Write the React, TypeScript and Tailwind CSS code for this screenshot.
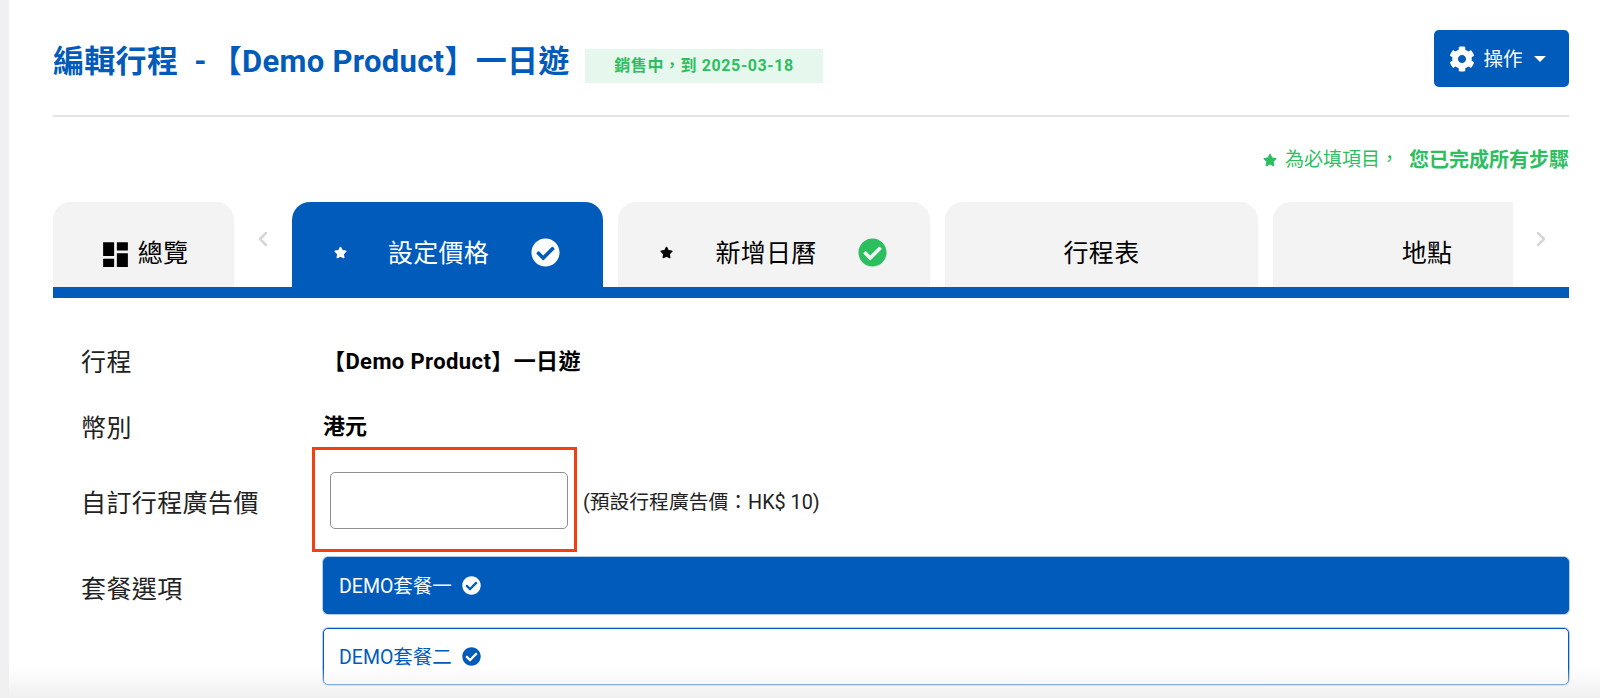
import { ChevronLeft, ChevronRight } from 'lucide-react'
import { FaCheckCircle, FaCog, FaStar } from 'react-icons/fa'
import { MdDashboard } from 'react-icons/md'

const BLUE = 'text-[#015bbb]'

function Star({ className }: { className: string }) {
  return <FaStar className={`text-[13px] ${className}`} />
}

function Tab({ label, width, textClass, mark, check, active }: { label: string; width: string; textClass?: string; mark?: boolean; check?: boolean; active?: boolean }) {
  const color = active ? 'bg-[#015bbb] text-white' : 'bg-[#f3f3f3] text-black'
  return (
    <div className={`relative flex h-[85px] shrink-0 items-center justify-center rounded-t-[18px] pt-[19px] text-[25px] tracking-[0.3px] ${width} ${color}`}>
      {mark && <Star className="absolute left-[42px] top-[44px]" />}
      <span className={textClass}>{label}</span>
      {check && <FaCheckCircle className={`absolute right-[43px] top-[36px] text-[29px] ${active ? 'text-white' : 'text-[#2dbe60]'}`} />}
    </div>
  )
}

function Row({ label, height, labelClass, children }: { label: string; height: string; labelClass?: string; children: React.ReactNode }) {
  return (
    <div className={`flex items-center ${height}`}>
      <div className={`w-[270px] pl-[28px] text-[25px] tracking-[0.4px] text-[#222] ${labelClass ?? ''}`}>{label}</div>
      {children}
    </div>
  )
}

function PackageOption({ label, selected }: { label: string; selected?: boolean }) {
  return (
    <div className={`flex h-[57px] items-center gap-[10px] rounded-[5px] border border-[#015bbb] pl-[15px] text-[19.5px] shadow-[0_0_0_1px_rgba(1,91,187,0.3)] ${selected ? 'bg-[#015bbb] text-white' : `bg-white ${BLUE}`}`}>
      <span className="pt-[3px]">{label}</span>
      <FaCheckCircle className="text-[19px]" />
    </div>
  )
}

export default function App() {
  return (
    <div className="relative h-[698px] overflow-hidden bg-white" style={{ fontFamily: 'Roboto, "Noto Sans CJK TC", sans-serif' }}>
      <div className="flex h-full">
        <div className="w-[9px] shrink-0 bg-[#f0f0f3]" />
        <main className="ml-[44px] w-[1516px]">
          <header className="flex h-[117px] border-b-2 border-[#e4e4e4] pt-[30px]">
            <div className="flex h-[57px] items-center pt-[8px]">
              <h1 className={`w-[517px] text-[31px] font-bold tracking-[0.3px] whitespace-pre ${BLUE}`}>
                編輯行程  -<span className="ml-[4px]">【Demo Product】一日遊</span>
              </h1>
              <span className="ml-[15px] mt-[6px] flex h-[34px] w-[238px] items-center justify-center bg-[#e6f8ee] text-[16px] font-bold tracking-[0.6px] text-[#2dbe60]">
                銷售中，到 2025-03-18
              </span>
            </div>
            <button className="ml-auto flex h-[57px] w-[135px] items-center justify-center gap-[8px] rounded-[5px] bg-[#015bbb] pr-[8px] text-[19.5px] text-white">
              <FaCog className="text-[26px]" />
              <span className="pt-[3px]">操作</span>
              <span className="ml-[3px] h-0 w-0 border-x-[6px] border-t-[6px] border-x-transparent border-t-white" />
            </button>
          </header>

          <div className="flex h-[85px] items-center justify-end pt-[1px] text-[19px] text-[#2dbe60]">
            <FaStar className="mr-[8px] text-[14px]" />
            <span>為必填項目，</span>
            <span className="ml-[10px] text-[20px] font-bold">您已完成所有步驟</span>
          </div>

          <nav className="flex items-start border-b-[11px] border-[#015bbb]">
            <div className="flex h-[85px] w-[181px] shrink-0 items-center justify-center gap-[6px] rounded-t-[18px] bg-[#f3f3f3] pt-[19px] text-[25px] tracking-[0.3px] text-black">
              <MdDashboard className="text-[33px]" />
              <span>總覽</span>
            </div>
            <div className="flex h-[85px] w-[58px] shrink-0 justify-center pt-[25px] text-[#d6d6d6]">
              <ChevronLeft size={24} strokeWidth={2.5} />
            </div>
            <div className="flex gap-[15px]">
              <Tab label="設定價格" width="w-[311px]" textClass="mr-[18px]" mark check active />
              <Tab label="新增日曆" width="w-[312px]" textClass="mr-[16px]" mark check />
              <Tab label="行程表" width="w-[313px]" />
              <Tab label="地點" width="w-[240px] rounded-tr-none" textClass="ml-[68px]" />
            </div>
            <div className="flex h-[85px] flex-1 justify-center pt-[25px] text-[#d6d6d6]">
              <ChevronRight size={24} strokeWidth={2.5} />
            </div>
          </nav>

          <section className="pt-[32px]">
            <Row label="行程" height="h-[66px]">
              <span className="pb-[4px] text-[22px] font-bold tracking-[0.4px] text-black">【Demo Product】一日遊</span>
            </Row>
            <Row label="幣別" height="h-[64px]" labelClass="pt-[2px]">
              <span className="pb-[4px] text-[22px] font-bold text-black">港元</span>
            </Row>
            <Row label="自訂行程廣告價" height="h-[80px]" labelClass="pt-[8px]">
              <div className="relative ml-[7px] flex items-center">
                <input className="h-[57px] w-[238px] rounded-[5px] border border-[#8e8e8e] bg-white" />
                <span className="ml-[15px] pt-[6px] text-[19.8px] text-[#222]">(預設行程廣告價：HK$ 10)</span>
                <div className="absolute left-[-18px] top-[-25px] h-[105px] w-[265px] border-[3px] border-[#f4400f]" />
              </div>
            </Row>
            <div className="flex pt-[17px]">
              <div className="w-[270px] pl-[28px] pt-[14px] text-[25px] tracking-[0.4px] text-[#222]">套餐選項</div>
              <div className="flex flex-1 flex-col gap-[14px]">
                <PackageOption label="DEMO套餐一" selected />
                <PackageOption label="DEMO套餐二" />
              </div>
            </div>
          </section>
        </main>
      </div>
      <div className="pointer-events-none absolute inset-x-0 bottom-0 h-[30px] bg-gradient-to-b from-transparent to-[#f0f0f0]" />
    </div>
  )
}
